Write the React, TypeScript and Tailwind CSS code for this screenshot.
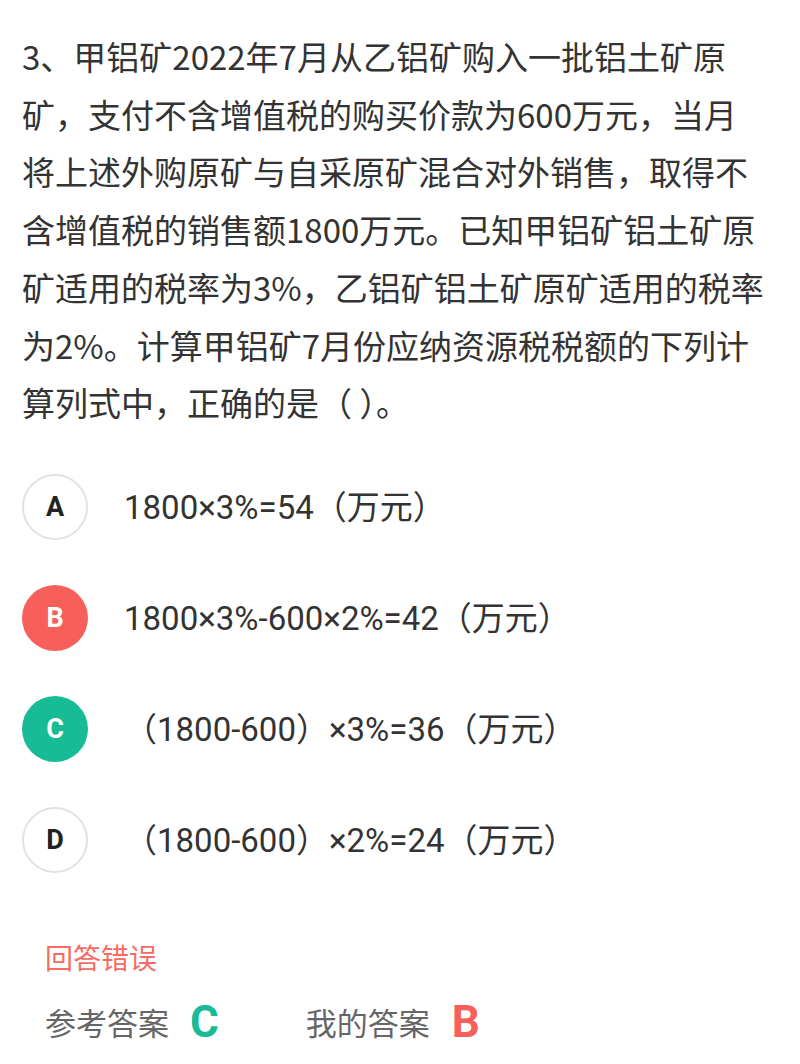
const font = { fontFamily: '"Noto Sans CJK SC", "Noto Sans", sans-serif' };
const optFont = { fontFamily: 'Roboto, "Noto Sans CJK SC", sans-serif' };

const lines = [
  '3、甲铝矿2022年7月从乙铝矿购入一批铝土矿原',
  '矿，支付不含增值税的购买价款为600万元，当月',
  '将上述外购原矿与自采原矿混合对外销售，取得不',
  '含增值税的销售额1800万元。已知甲铝矿铝土矿原',
  '矿适用的税率为3%，乙铝矿铝土矿原矿适用的税率',
  '为2%。计算甲铝矿7月份应纳资源税税额的下列计',
  '算列式中，正确的是（ ）。',
];

const options = [
  { key: 'A', text: '1800×3%=54（万元）', state: 'none' },
  { key: 'B', text: '1800×3%-600×2%=42（万元）', state: 'wrong' },
  { key: 'C', text: '（1800-600）×3%=36（万元）', state: 'right' },
  { key: 'D', text: '（1800-600）×2%=24（万元）', state: 'none' },
];

function Badge({ letter, state }: { letter: string; state: string }) {
  const cls =
    state === 'wrong'
      ? 'bg-[#f7605a] text-white'
      : state === 'right'
        ? 'bg-[#17bb95] text-white'
        : 'bg-white text-[#222] border-2 border-[#e2e2e2]';
  return (
    <div
      className={`w-[66px] h-[66px] rounded-full flex items-center justify-center text-[27px] font-bold shrink-0 ${cls}`}
      style={optFont}
    >
      {letter}
    </div>
  );
}

export default function App() {
  return (
    <div className="w-[800px] h-[1064px] bg-white px-[22px] overflow-hidden" style={font}>
      {/* 题干 */}
      <div className="pt-[28px] text-[33px] leading-[57.7px] text-[#333] whitespace-nowrap">
        {lines.map((l, i) => (
          <div key={i}>{l}</div>
        ))}
      </div>

      {/* 选项 */}
      <div className="mt-[20px]">
        {options.map((o) => (
          <div key={o.key} className="h-[111px] flex items-center">
            <Badge letter={o.key} state={o.state} />
            <span className="ml-[36px] text-[33px] text-[#333] whitespace-nowrap" style={optFont}>
              {o.text}
            </span>
          </div>
        ))}
      </div>

      {/* 结果 */}
      <div className="mt-[41px] pl-[23px]">
        <div className="text-[28px] leading-[40px] text-[#f86a63]">回答错误</div>
        <div className="mt-[25px] flex items-center h-[40px]">
          <span className="text-[31px] text-[#666]">参考答案</span>
          <span className="ml-[21px] text-[44px] font-bold text-[#17bb95]" style={optFont}>C</span>
          <span className="ml-[87px] text-[31px] text-[#666]">我的答案</span>
          <span className="ml-[22px] text-[44px] font-bold text-[#f7605a]" style={optFont}>B</span>
        </div>
      </div>
    </div>
  );
}
